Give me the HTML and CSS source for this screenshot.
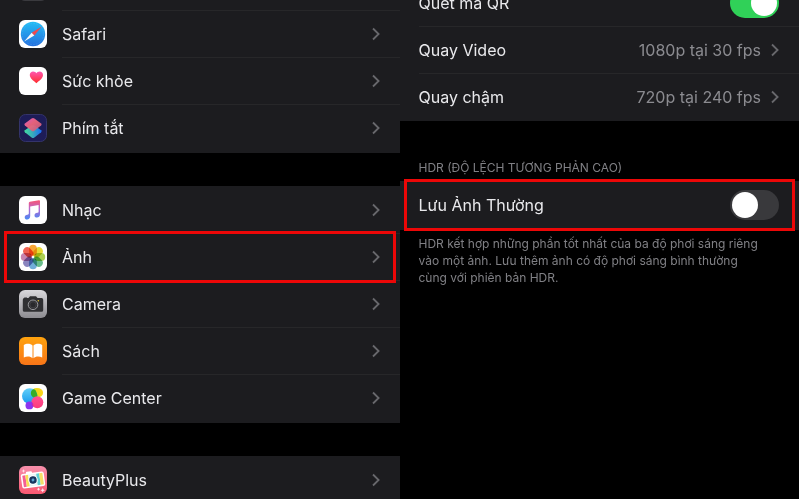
FILE: index.html
```
<!DOCTYPE html>
<html lang="vi">
<head>
  <meta charset="UTF-8">
  <title>Cài đặt</title>
  <link rel="stylesheet" href="styles.css">
</head>
<body>

  <svg width="0" height="0" class="defs" aria-hidden="true">
    <defs>
      <symbol id="chevron" viewBox="0 0 8 14">
        <path d="M1 1.5L6.6 7L1 12.5" fill="none" stroke="currentColor" stroke-width="1.8"/>
      </symbol>
      <linearGradient id="safariBlue" x2="0" y2="1"><stop stop-color="#25bdf5"/><stop offset="1" stop-color="#2470de"/></linearGradient>
      <linearGradient id="heartPink" x2="0" y2="1"><stop stop-color="#ff56b0"/><stop offset="1" stop-color="#ff2d2c"/></linearGradient>
      <linearGradient id="shortTop" x2="1" y2="1"><stop stop-color="#e85ac8"/><stop offset=".45" stop-color="#f2667b"/><stop offset="1" stop-color="#b95b83"/></linearGradient>
      <linearGradient id="shortBottom"><stop stop-color="#43dba0"/><stop offset=".5" stop-color="#37a8bd"/><stop offset="1" stop-color="#1769f4"/></linearGradient>
      <linearGradient id="noteTone" x2="0" y2="1"><stop stop-color="#fa5471"/><stop offset=".45" stop-color="#b968cf"/><stop offset="1" stop-color="#4689f5"/></linearGradient>
      <linearGradient id="cameraGray" x2="0" y2="1"><stop stop-color="#d9d8dc"/><stop offset="1" stop-color="#8d8c91"/></linearGradient>
      <linearGradient id="bookOrange" x2="0" y2="1"><stop stop-color="#ffa30e"/><stop offset="1" stop-color="#f87518"/></linearGradient>
      <linearGradient id="ballBlue" x2="0" y2="1"><stop stop-color="#62cff8"/><stop offset="1" stop-color="#189bee"/></linearGradient>
      <linearGradient id="ballYellow" x2="1"><stop stop-color="#dfd91d"/><stop offset="1" stop-color="#ffd51a"/></linearGradient>
      <linearGradient id="ballPink" x2="0" y2="1"><stop stop-color="#ff4f94"/><stop offset="1" stop-color="#fb3b7b"/></linearGradient>
      <linearGradient id="beautyPink" x2="0" y2="1"><stop stop-color="#f790ac"/><stop offset="1" stop-color="#fa5870"/></linearGradient>
    </defs>
  </svg>

  <main class="screens">

    <section class="screen">
      <div class="group group-top">
        <a class="row" href="#">
          <svg class="app-icon" viewBox="0 0 28 28"><rect width="28" height="28" rx="6" fill="#3a3a3e"/></svg>
        </a>
        <a class="row" href="#">
          <svg class="app-icon" viewBox="0 0 28 28">
            <rect width="28" height="28" rx="6" fill="#fff"/>
            <circle cx="14" cy="14" r="12.2" fill="url(#safariBlue)"/>
            <circle cx="14" cy="14" r="10.6" fill="none" stroke="#8ed2fb" stroke-width="1" stroke-dasharray=".4 1.2" opacity=".4"/>
            <path d="M22.8 6.4L15.3 15.4L12.6 12.7Z" fill="#ef4a4f"/>
            <path d="M5.2 21.6L12.6 12.7L15.3 15.4Z" fill="#f4f7fb"/>
          </svg>
          <span class="row-label">Safari</span>
          <svg class="chevron"><use href="#chevron"/></svg>
        </a>
        <a class="row" href="#">
          <svg class="app-icon" viewBox="0 0 28 28">
            <rect width="28" height="28" rx="6" fill="#fff"/>
            <path d="M17.4 16.2C14.6 14 10.8 11.4 10.8 8.1C10.8 5.9 12.3 4.5 14.1 4.5C15.6 4.5 16.8 5.2 17.4 6.3C18 5.2 19.2 4.5 20.7 4.5C22.5 4.5 24 5.9 24 8.1C24 11.4 20.2 14 17.4 16.2Z" fill="url(#heartPink)"/>
          </svg>
          <span class="row-label">Sức khỏe</span>
          <svg class="chevron"><use href="#chevron"/></svg>
        </a>
        <a class="row" href="#">
          <svg class="app-icon" viewBox="0 0 28 28">
            <rect x=".5" y=".5" width="27" height="27" rx="6" fill="#1d1c57" stroke="#34346a"/>
            <path d="M12.6 11.6Q14 10.7 15.4 11.6L22.1 16.3Q23.2 17.3 22.1 18.3L15.4 23.4Q14 24.4 12.6 23.4L5.9 18.3Q4.8 17.3 5.9 16.3Z" fill="url(#shortBottom)"/>
            <path d="M12.6 4.4Q14 3.4 15.4 4.4L22.1 9.5Q23.2 10.6 22.1 11.6L15.4 16.7Q14 17.7 12.6 16.7L5.9 11.6Q4.8 10.6 5.9 9.5Z" fill="url(#shortTop)" opacity=".94"/>
          </svg>
          <span class="row-label">Phím tắt</span>
          <svg class="chevron"><use href="#chevron"/></svg>
        </a>
      </div>

      <div class="group">
        <a class="row" href="#">
          <svg class="app-icon" viewBox="0 0 28 28">
            <rect width="28" height="28" rx="6" fill="#fff"/>
            <path d="M9.8 7.1Q9.8 6 10.9 5.8L19.9 4.2Q21 4 21 5.1V18.2C21 20.3 19.7 21.5 17.9 21.5C16.5 21.5 15.5 20.7 15.5 19.4C15.5 17.9 16.7 17.1 18.2 16.8C19.3 16.6 19.6 16.3 19.6 15.4V9L11.2 10.5V20.1C11.2 22.3 9.9 23.5 8.1 23.5C6.7 23.5 5.7 22.6 5.7 21.4C5.7 19.9 6.8 19.1 8.4 18.8C9.5 18.6 9.8 18.2 9.8 17.3Z" fill="url(#noteTone)"/>
          </svg>
          <span class="row-label">Nhạc</span>
          <svg class="chevron"><use href="#chevron"/></svg>
        </a>
        <a class="row highlighted" href="#">
          <svg class="app-icon" viewBox="0 0 28 28">
            <rect width="28" height="28" rx="6" fill="#fff"/>
            <g class="petals">
              <rect x="10.1" y="1.8" width="7.8" height="11" rx="3.9" fill="#f99c1f"/>
              <rect x="10.1" y="1.8" width="7.8" height="11" rx="3.9" fill="#e6d51e" transform="rotate(45 14 14)"/>
              <rect x="10.1" y="1.8" width="7.8" height="11" rx="3.9" fill="#a4cc40" transform="rotate(90 14 14)"/>
              <rect x="10.1" y="1.8" width="7.8" height="11" rx="3.9" fill="#58b57f" transform="rotate(135 14 14)"/>
              <rect x="10.1" y="1.8" width="7.8" height="11" rx="3.9" fill="#63a5d5" transform="rotate(180 14 14)"/>
              <rect x="10.1" y="1.8" width="7.8" height="11" rx="3.9" fill="#7d78b8" transform="rotate(225 14 14)"/>
              <rect x="10.1" y="1.8" width="7.8" height="11" rx="3.9" fill="#c277a6" transform="rotate(270 14 14)"/>
              <rect x="10.1" y="1.8" width="7.8" height="11" rx="3.9" fill="#ee513f" transform="rotate(315 14 14)"/>
            </g>
          </svg>
          <span class="row-label">Ảnh</span>
          <svg class="chevron"><use href="#chevron"/></svg>
        </a>
        <a class="row" href="#">
          <svg class="app-icon" viewBox="0 0 28 28">
            <rect width="28" height="28" rx="6" fill="url(#cameraGray)"/>
            <path d="M5.2 8.1V7.4H8V8.1H9.5L11 6.2H17L18.5 8.1H22.6Q24.2 8.1 24.2 9.7V20.2Q24.2 21.8 22.6 21.8H5.4Q3.8 21.8 3.8 20.2V9.7Q3.8 8.1 5.2 8.1Z" fill="#2f2f32"/>
            <circle cx="14" cy="14.8" r="4.8" fill="#2f2f32" stroke="#98989c" stroke-width="1"/>
            <circle cx="14" cy="14.8" r="3.1" fill="#29292c" stroke="#505054" stroke-width=".6"/>
            <circle cx="19.3" cy="10.8" r=".8" fill="#e8c52c"/>
          </svg>
          <span class="row-label">Camera</span>
          <svg class="chevron"><use href="#chevron"/></svg>
        </a>
        <a class="row" href="#">
          <svg class="app-icon" viewBox="0 0 28 28">
            <rect width="28" height="28" rx="6" fill="url(#bookOrange)"/>
            <path d="M13.5 8.5C11.8 6.3 7.2 6.1 4.8 8V20.6C7.5 19.2 11.5 19.2 13.5 21.2Z" fill="#fff"/>
            <path d="M14.5 8.5C16.2 6.3 20.8 6.1 23.2 8V20.6C20.5 19.2 16.5 19.2 14.5 21.2Z" fill="#fff"/>
          </svg>
          <span class="row-label">Sách</span>
          <svg class="chevron"><use href="#chevron"/></svg>
        </a>
        <a class="row" href="#">
          <svg class="app-icon" viewBox="0 0 28 28">
            <rect width="28" height="28" rx="6" fill="#fff"/>
            <ellipse cx="18" cy="8.8" rx="6.1" ry="4.9" fill="url(#ballYellow)"/>
            <circle cx="10.7" cy="12" r="7.7" fill="url(#ballBlue)"/>
            <path d="M12 7.9C13 4.5 16.5 4 17.5 8.5C18.6 10.6 18.7 12.3 17.8 13.5C15 14.3 11.2 12.5 12 7.9Z" fill="#35ad28"/>
            <circle cx="18.3" cy="18.2" r="6" fill="url(#ballPink)"/>
            <circle cx="10.4" cy="21.4" r="3.9" fill="#8c35ee"/>
            <path d="M12.7 18.4Q14.8 20.3 14.1 22.4Q12.3 20.8 12.7 18.4Z" fill="#d520a4"/>
          </svg>
          <span class="row-label">Game Center</span>
          <svg class="chevron"><use href="#chevron"/></svg>
        </a>
      </div>

      <div class="group">
        <a class="row" href="#">
          <svg class="app-icon" viewBox="0 0 28 28">
            <rect width="28" height="28" rx="6" fill="url(#beautyPink)"/>
            <g transform="rotate(-8 14 14)">
              <rect x="8" y="5" width="6" height="3" rx="1" fill="#fff"/>
              <rect x="2.4" y="6.7" width="23.2" height="14.6" rx="2" fill="#fff"/>
              <rect x="4" y="8.2" width="3" height="11.6" fill="#f45f95"/>
              <rect x="7" y="8.2" width="3" height="11.6" fill="#f8dd54"/>
              <rect x="10" y="8.2" width="8" height="11.6" fill="#e8f4f6"/>
              <rect x="18" y="8.2" width="3" height="11.6" fill="#5ed1d5"/>
              <rect x="21" y="8.2" width="3.2" height="11.6" fill="#f6df68"/>
              <circle cx="14" cy="14" r="4.8" fill="#fff"/>
              <circle cx="14" cy="14" r="3.7" fill="#17355f"/>
              <circle cx="14" cy="14" r="1.4" fill="#5da4cf"/>
            </g>
            <path d="M4.5 3L5.1 4.4L6.5 5L5.1 5.6L4.5 7L3.9 5.6L2.5 5L3.9 4.4ZM19.5 21.5L20.1 22.6L21.2 23.2L20.1 23.8L19.5 24.9L18.9 23.8L17.8 23.2L18.9 22.6ZM23.7 22L24.4 23.5L25.9 24.2L24.4 24.9L23.7 26.4L23 24.9L21.5 24.2L23 23.5Z" fill="#ffe3ea"/>
          </svg>
          <span class="row-label">BeautyPlus</span>
          <svg class="chevron"><use href="#chevron"/></svg>
        </a>
      </div>
    </section>

    <section class="screen screen-camera">
      <div class="group group-top">
        <div class="row">
          <label class="row-label" for="scanQr">Quét mã QR</label>
          <input class="toggle" type="checkbox" id="scanQr" checked>
        </div>
        <a class="row" href="#">
          <span class="row-label">Quay Video</span>
          <span class="row-value">1080p tại 30 fps</span>
          <svg class="chevron"><use href="#chevron"/></svg>
        </a>
        <a class="row" href="#">
          <span class="row-label">Quay chậm</span>
          <span class="row-value">720p tại 240 fps</span>
          <svg class="chevron"><use href="#chevron"/></svg>
        </a>
      </div>

      <h2 class="group-title">HDR (ĐỘ LỆCH TƯƠNG PHẢN CAO)</h2>
      <div class="group">
        <div class="row highlighted">
          <label class="row-label" for="keepNormal">Lưu Ảnh Thường</label>
          <input class="toggle" type="checkbox" id="keepNormal">
        </div>
      </div>
      <p class="group-note">HDR kết hợp những phần tốt nhất của ba độ phơi sáng riêng vào một ảnh. Lưu thêm ảnh có độ phơi sáng bình thường cùng với phiên bản HDR.</p>
    </section>

  </main>

</body>
</html>
```
FILE: styles.css
```
* {
  box-sizing: border-box;
}

body {
  margin: 0;
  background: #000;
  color: #e9e9ec;
  font-family: Inter, "Liberation Sans", sans-serif;
  font-size: 16px;
}

.defs {
  position: absolute;
}

.screens {
  display: grid;
  grid-template-columns: 1fr 1fr;
  height: 100vh;
  overflow: hidden;
}

.screen {
  display: flex;
  flex-direction: column;
  gap: 33px;
  min-width: 0;
}

.screen-camera {
  gap: 0;
}

.group {
  padding-bottom: 2px;
  background: #1c1c1f;
}

/* both lists are scrolled a little past their first row */
.group-top {
  margin-top: -37px;
}

.screen-camera .group-top {
  margin-top: -22px;
  padding: 1px 0;
}

.row {
  position: relative;
  display: flex;
  align-items: center;
  height: 47px;
  padding: 0 20px 0 19px;
  color: inherit;
  text-decoration: none;
}

.row + .row::before {
  content: "";
  position: absolute;
  top: 0;
  left: 62px;
  right: 0;
  height: 1px;
  background: #272729;
}

.screen-camera .row + .row::before {
  left: 19px;
}

.highlighted::after {
  content: "";
  position: absolute;
  z-index: 1;
  inset: -2px 4px -3px;
  border: 3px solid #ec0707;
  pointer-events: none;
}

.app-icon {
  width: 28px;
  height: 28px;
  margin-right: 15px;
}

.petals rect {
  mix-blend-mode: multiply;
  opacity: 0.9;
}

.row-label {
  flex: 1;
}

.row-value {
  color: #8b8b90;
}

.chevron {
  width: 8px;
  height: 14px;
  margin-left: 10px;
  color: #68686c;
}

.toggle {
  appearance: none;
  display: flex;
  align-items: center;
  width: 49px;
  height: 30px;
  margin: 0;
  padding: 2px;
  border-radius: 15px;
  background: #39393c;
}

.toggle::before {
  content: "";
  width: 26px;
  height: 26px;
  border-radius: 50%;
  background: #fff;
}

.toggle:checked {
  justify-content: flex-end;
  background: #30d158;
}

.group-title {
  margin: 38px 19px 5px;
  color: #808085;
  font-size: 12px;
  font-weight: 400;
  line-height: 17px;
}

.group-note {
  margin: 5px 34px 0 19px;
  color: #808085;
  font-size: 12px;
  line-height: 17px;
}
```
